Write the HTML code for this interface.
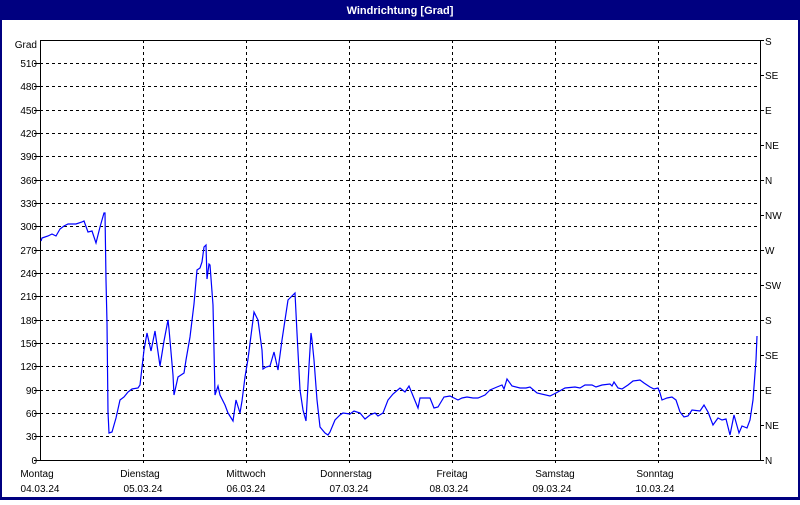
<!DOCTYPE html><html><head><style>
body{margin:0;width:800px;height:500px;overflow:hidden;background:#fff}
text{font-family:"Liberation Sans",sans-serif;font-size:10px;fill:#000}
</style></head><body>
<svg width="800" height="500" xmlns="http://www.w3.org/2000/svg" shape-rendering="crispEdges">
<rect x="0" y="0" width="800" height="500" fill="#000080"/>
<rect x="2" y="20" width="796" height="477" fill="#fff"/>
<text x="400" y="14" text-anchor="middle" style="fill:#fff;font-weight:bold;font-size:11px">Windrichtung [Grad]</text>
<g stroke="#000" stroke-dasharray="3,3" stroke-width="1">
<path d="M40 63.5H760M40 86.5H760M40 110.5H760M40 133.5H760M40 156.5H760M40 180.5H760M40 203.5H760M40 226.5H760M40 250.5H760M40 273.5H760M40 296.5H760M40 320.5H760M40 343.5H760M40 366.5H760M40 390.5H760M40 413.5H760M40 436.5H760"/>
<path d="M143.5 40V465M246.5 40V465M349.5 40V465M452.5 40V465M555.5 40V465M658.5 40V465"/>
</g>
<path d="M40.5 40V460.5H760.5V40M40 40.5H760" fill="none" stroke="#000"/>
<g stroke="#000"><path d="M34 63.5H40M34 86.5H40M34 110.5H40M34 133.5H40M34 156.5H40M34 180.5H40M34 203.5H40M34 226.5H40M34 250.5H40M34 273.5H40M34 296.5H40M34 320.5H40M34 343.5H40M34 366.5H40M34 390.5H40M34 413.5H40M34 436.5H40M34 460.5H40"/>
<path d="M760 40.5H764M760 75.5H764M760 110.5H764M760 145.5H764M760 180.5H764M760 215.5H764M760 250.5H764M760 285.5H764M760 320.5H764M760 355.5H764M760 390.5H764M760 425.5H764M760 460.5H764"/></g>
<g text-anchor="end">
<text x="37" y="48">Grad</text>
<text x="37" y="67">510</text><text x="37" y="90">480</text><text x="37" y="114">450</text><text x="37" y="137">420</text><text x="37" y="160">390</text><text x="37" y="184">360</text><text x="37" y="207">330</text><text x="37" y="230">300</text><text x="37" y="254">270</text><text x="37" y="277">240</text><text x="37" y="300">210</text><text x="37" y="324">180</text><text x="37" y="347">150</text><text x="37" y="370">120</text><text x="37" y="394">90</text><text x="37" y="417">60</text><text x="37" y="440">30</text><text x="37" y="464">0</text>
</g>
<g>
<text x="765" y="45">S</text><text x="765" y="79">SE</text><text x="765" y="114">E</text><text x="765" y="149">NE</text><text x="765" y="184">N</text><text x="765" y="219">NW</text><text x="765" y="254">W</text><text x="765" y="289">SW</text><text x="765" y="324">S</text><text x="765" y="359">SE</text><text x="765" y="394">E</text><text x="765" y="429">NE</text><text x="765" y="464">N</text>
</g>
<g text-anchor="middle">
<text x="37" y="477">Montag</text><text x="40" y="492">04.03.24</text>
<text x="140" y="477">Dienstag</text><text x="143" y="492">05.03.24</text>
<text x="246" y="477">Mittwoch</text><text x="246" y="492">06.03.24</text>
<text x="346" y="477">Donnerstag</text><text x="349" y="492">07.03.24</text>
<text x="452" y="477">Freitag</text><text x="449" y="492">08.03.24</text>
<text x="555" y="477">Samstag</text><text x="552" y="492">09.03.24</text>
<text x="655" y="477">Sonntag</text><text x="655" y="492">10.03.24</text>
</g>
<polyline shape-rendering="auto" fill="none" stroke="#0000ff" stroke-width="1.2" points="41,241 42,238 48,236 52,234 56,236 60,229 64,226 68,224 76,224 82,222 84,221 88,232 92,231 96,243 100,227 104,213 105,213 106,280 107,323 108,412 109,433 112,432 116,418 120,400 124,397 128,392 132,389 138,388 140,385 144,350 147,333 151,351 155,331 160,366 164,341 168,320 169,329 173,375 174,395 178,377 184,373 186,360 190,337 194,304 197,270 200,268 202,262 204,247 206,245 207,279 209,264 210,265 213,305 215,395 218,386 220,395 225,405 228,413 233,421 236,400 240,413 242,401 245,377 248,359 254,312 258,320 262,350 263,369 266,367 270,366 274,352 278,370 282,340 288,300 295,293 297,333 300,390 303,410 306,421 309,366 311,333 312,340 314,360 317,400 320,427 325,433 328,435 330,432 335,420 340,415 343,413 350,414 354,411 360,413 365,419 370,415 375,413 378,416 383,413 388,400 393,394 400,388 405,392 409,386 418,408 420,398 430,398 434,408 438,407 444,397 450,396 456,399 458,400 462,398 467,397 473,398 478,398 485,395 490,390 497,387 502,385 504,389 507,379 512,386 520,388 526,388 530,387 537,393 550,396 556,393 565,388 575,387 580,388 585,385 592,385 596,387 602,385 610,384 612,386 614,382 618,388 622,389 628,385 633,381 640,380 644,383 650,387 654,389 658,388 660,393 662,400 667,398 672,397 676,400 680,412 684,417 688,416 692,410 700,411 704,405 708,412 713,425 718,418 722,420 726,419 730,435 734,415 739,433 742,426 747,428 750,420 753,400 756,360 757,336"/>
</svg>
</body></html>
